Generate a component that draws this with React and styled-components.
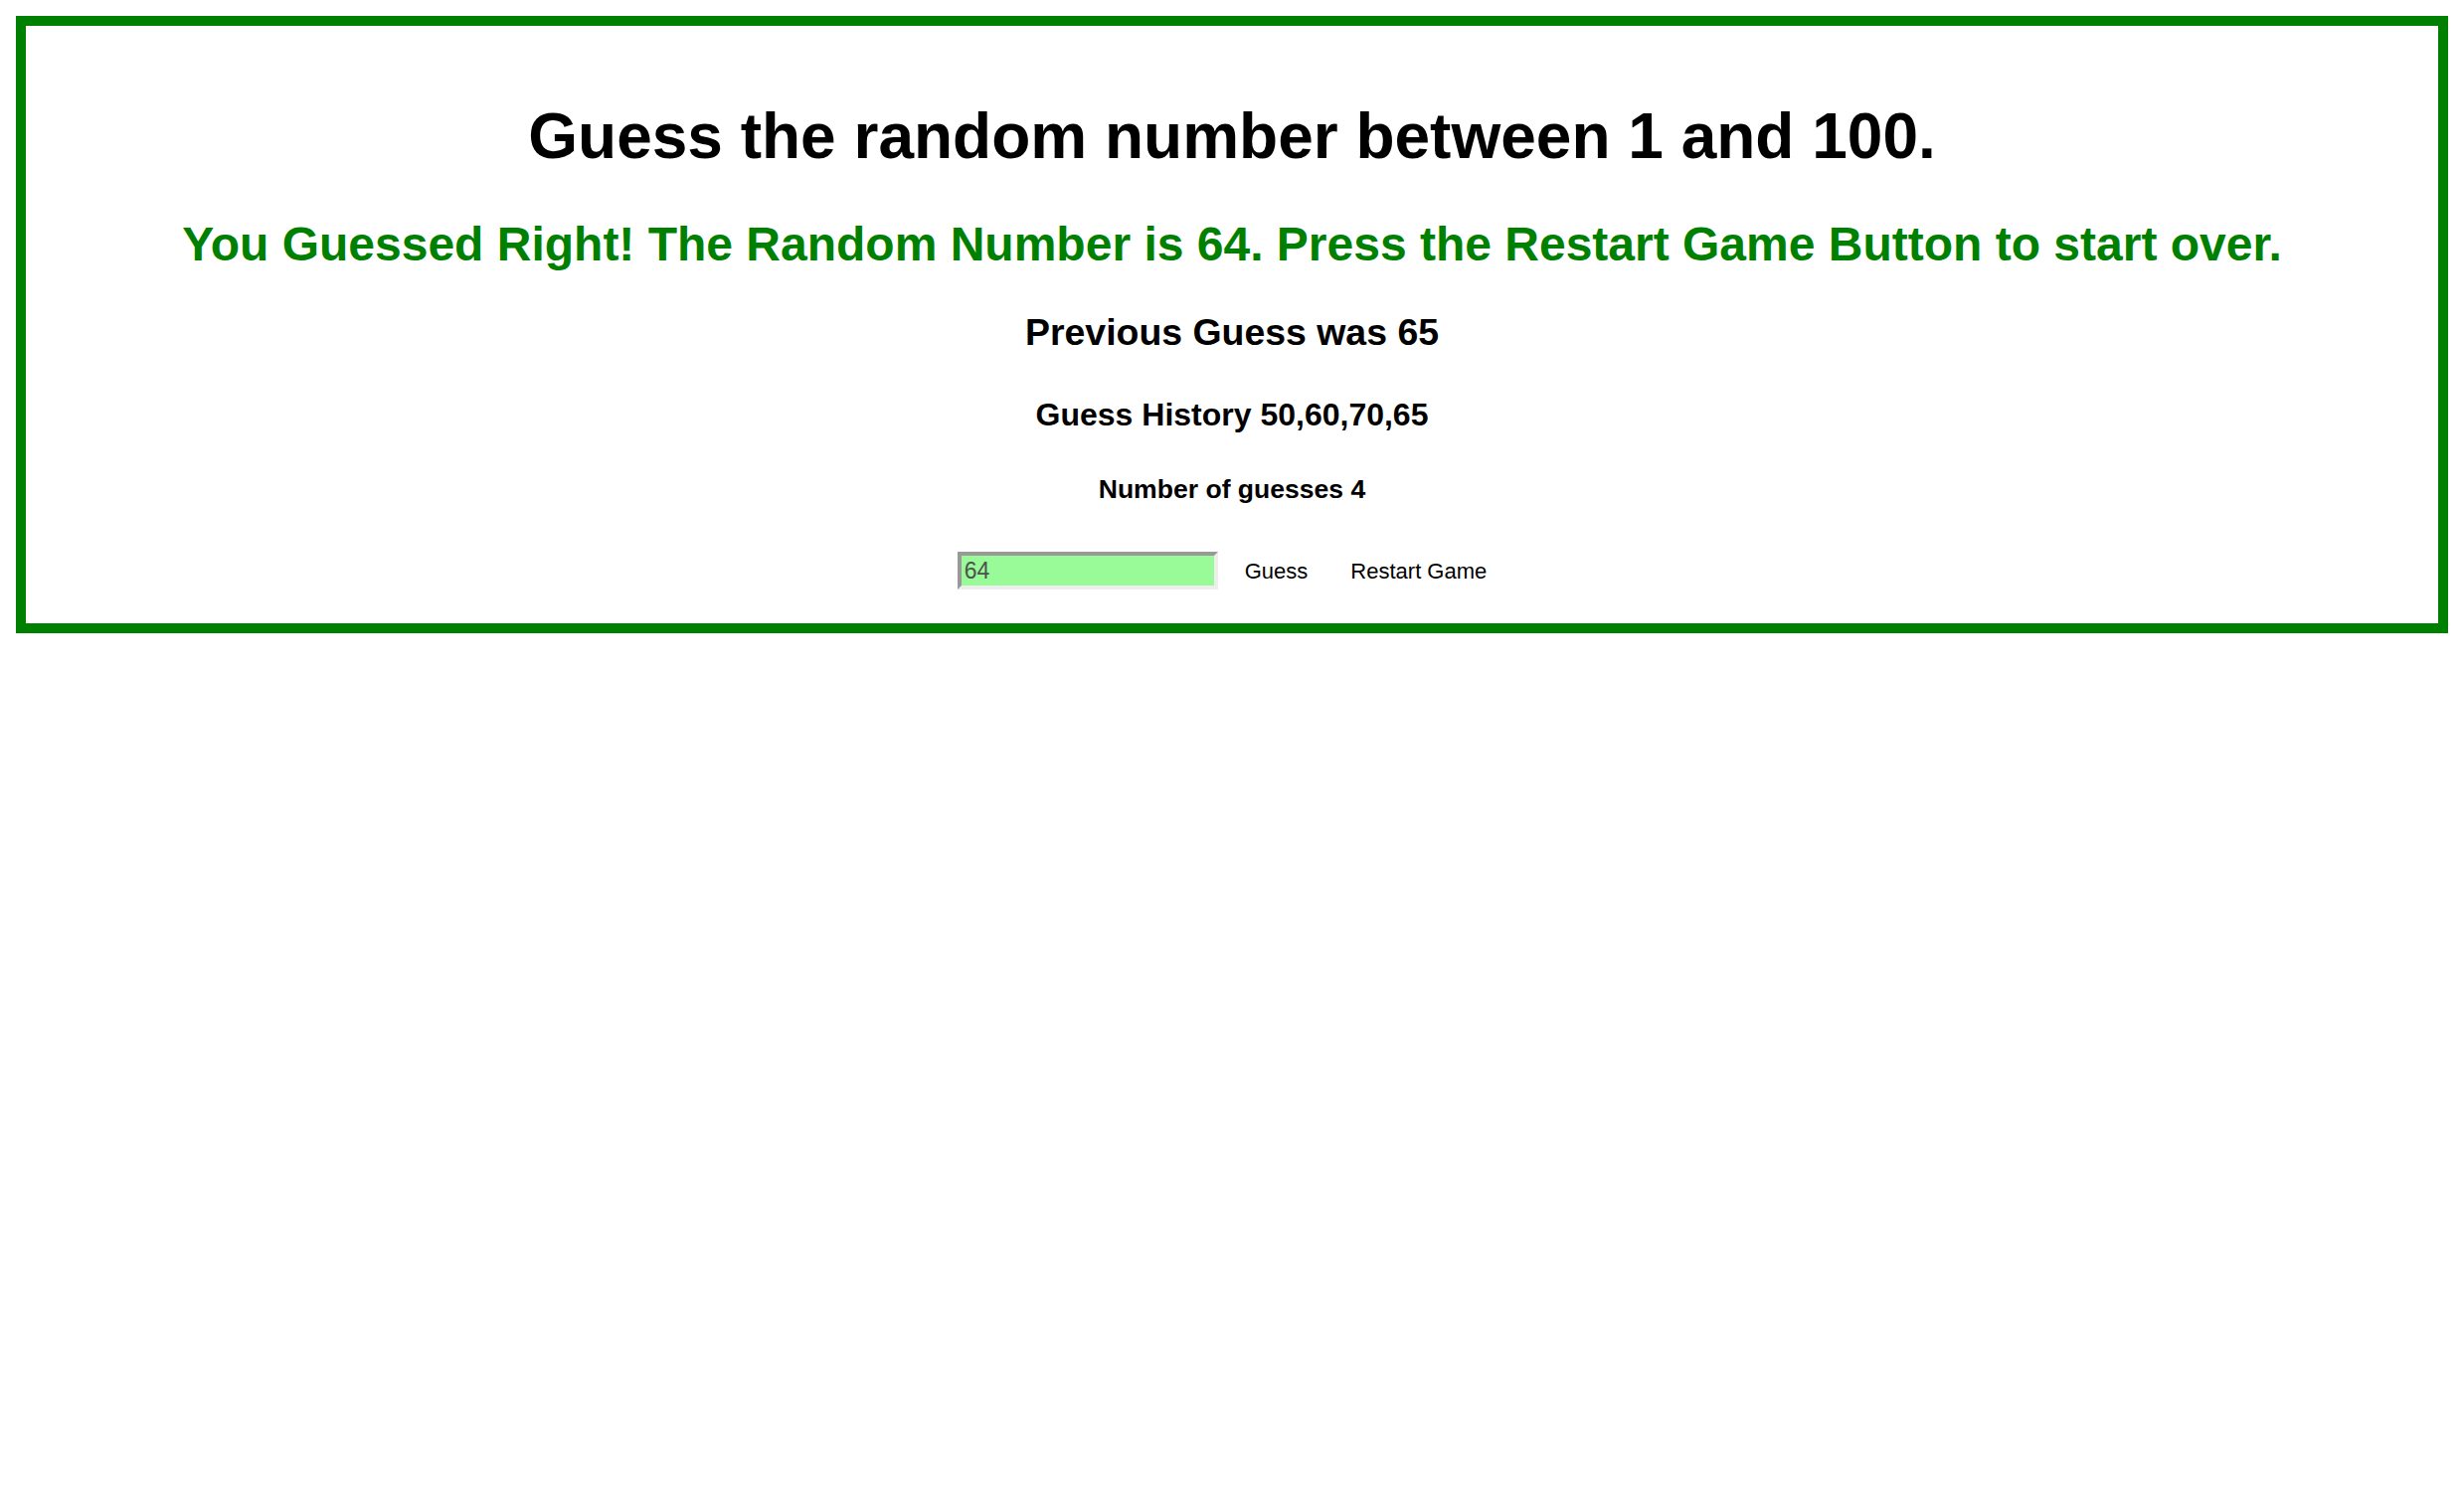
import React, { useState } from 'react';
import styled, { createGlobalStyle } from 'styled-components';

const GlobalStyle = createGlobalStyle`
  html, body {
    margin: 0;
    padding: 0;
    background: #fff;
  }

  body {
    padding: 16px;
    font-family: "Liberation Sans", Arial, Helvetica, sans-serif;
    color: #000;
  }
`;

const GameBox = styled.div`
  border: 10px solid #008000;
  padding: 32px 32px 34px;
  text-align: center;
`;

const Title = styled.h1`
  font-size: 64px;
  line-height: 1.15;
  font-weight: bold;
  margin: 43px 0;
`;

const Message = styled.h2`
  font-size: 48px;
  line-height: 1.15;
  font-weight: bold;
  color: ${({ $right }) => ($right ? '#008000' : '#c00000')};
  margin: 0 0 40px;
`;

const Info = styled.h3`
  font-size: ${({ $size }) => $size}px;
  line-height: 1.15;
  font-weight: bold;
  margin: 0 0 ${({ $gap }) => $gap}px;
`;

const Controls = styled.div`
  display: flex;
  justify-content: center;
  align-items: center;
  gap: 11px;
  padding-right: 4px;
`;

const GuessInput = styled.input`
  box-sizing: border-box;
  width: 262px;
  height: 38px;
  padding: 0 3px;
  border-width: 4px;
  border-style: solid;
  border-color: #999 #eee #eee #999;
  background: #98fb98;
  color: #545454;
  font-family: "Liberation Sans", Arial, sans-serif;
  font-size: 23px;
  outline: none;

  &:disabled {
    color: #505050;
    -webkit-text-fill-color: #505050;
    background: #98fb98;
    opacity: 1;
  }
`;

const PlainButton = styled.button`
  background: none;
  border: none;
  padding: 0 16px;
  margin: 0;
  font-family: "Liberation Sans", Arial, sans-serif;
  font-size: 22px;
  line-height: 1.15;
  color: #000;
  cursor: pointer;
`;

const App = () => {
  const [value, setValue] = useState('64');
  const history = [50, 60, 70, 65];

  return (
    <>
      <GlobalStyle />
      <GameBox>
        <Title>Guess the random number between 1 and 100.</Title>
        <Message $right>
          You Guessed Right! The Random Number is 64. Press the Restart Game Button to start over.
        </Message>
        <Info $size={37.44} $gap={43}>Previous Guess was 65</Info>
        <Info as="h4" $size={32} $gap={41}>Guess History {history.join(',')}</Info>
        <Info as="h5" $size={26.56} $gap={48}>Number of guesses {history.length}</Info>
        <Controls>
          <GuessInput
            type="text"
            value={value}
            disabled
            onChange={(e) => setValue(e.target.value)}
          />
          <PlainButton>Guess</PlainButton>
          <PlainButton>Restart Game</PlainButton>
        </Controls>
      </GameBox>
    </>
  );
};

export default App;
